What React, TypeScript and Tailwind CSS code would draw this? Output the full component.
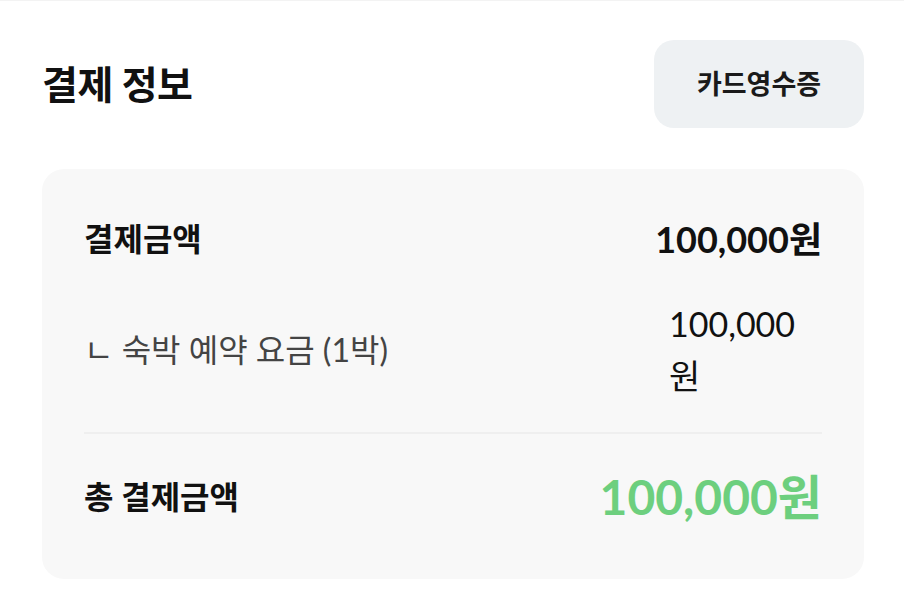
import React from 'react';

const font = "font-['Lato','Noto_Sans_CJK_KR',sans-serif]";

const App: React.FC = () => {
  return (
    <div className={`min-h-[599px] w-[904px] bg-white border-t border-[#f3f3f3] ${font}`}>
      {/* Header */}
      <div className="flex items-center justify-between pl-[42px] pr-[40px] pt-[39px]">
        <h2 className="text-[39px] font-bold leading-none text-[#111] tracking-[-0.5px]">결제 정보</h2>
        <button className="h-[88px] w-[210px] rounded-[20px] bg-[#eef1f3] text-[27px] font-bold text-[#1a1a1a]">
          카드영수증
        </button>
      </div>

      {/* Payment card */}
      <div className="ml-[42px] mr-[40px] mt-[41px] rounded-[22px] bg-[#f8f8f8] px-[42px] pt-[48px] pb-[53px]">
        <div className="flex h-[44px] items-center justify-between">
          <span className="text-[32px] font-bold text-[#111]">결제금액</span>
          <span className="text-[36px] font-bold text-[#111]">100,000원</span>
        </div>

        <div className="mt-[37px] flex items-center justify-between">
          <span className="text-[32px] text-[#444]">ㄴ 숙박 예약 요금 (1박)</span>
          <span className="w-[153px] text-[34px] leading-[52px] text-[#111]">100,000원</span>
        </div>

        <div className="mt-[30px] h-[2px] bg-[#efefef]" />

        <div className="mt-[34px] flex h-[58px] items-center justify-between">
          <span className="text-[32px] font-bold text-[#111]">총 결제금액</span>
          <span className="text-[48px] font-bold text-[#6dcf7e]">100,000원</span>
        </div>
      </div>
    </div>
  );
};

export default App;
